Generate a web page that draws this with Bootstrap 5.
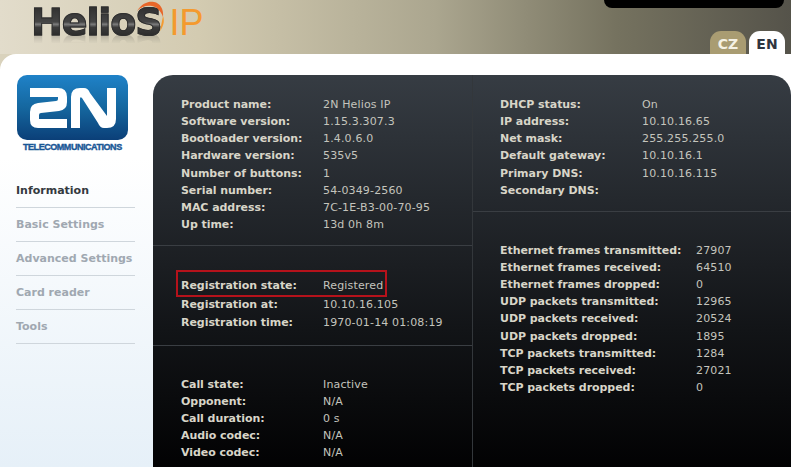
<!DOCTYPE html>
<html lang="en">
<head>
  <meta charset="UTF-8" />
  <meta name="viewport" content="width=device-width, initial-scale=1.0" />
  <title>Helios IP</title>
  <link href="https://cdn.jsdelivr.net/npm/bootstrap@5.3.0/dist/css/bootstrap.min.css" rel="stylesheet">
  <style>
    html, body { height: 467px; overflow: hidden; }
    body {
      background: #fff;
      font-family: "DejaVu Sans", sans-serif;
      font-size: 11px;
    }
    .top-bar {
      height: 54px;
      background: linear-gradient(90deg, #e2dccb 0%, #d3cbb1 25%, #aba68f 55%, #75725f 78%, #55534a 100%);
      position: relative;
    }
    .brand { padding: 3px 0 0 31px; height: 54px; overflow: hidden; }
    .brand-main {
      font-family: "DejaVu Sans", sans-serif;
      font-size: 38px;
      line-height: 38px;
      font-weight: 700;
      letter-spacing: -1.1px;
      -webkit-text-stroke: 1px #2f2f2f;
      background: linear-gradient(180deg, #2b2b2b 0%, #454545 50%, #7c7c7c 56%, #3b3b3b 64%, #222 100%);
      -webkit-background-clip: text;
      background-clip: text;
      color: transparent;
      -webkit-box-reflect: below -12px linear-gradient(transparent 62%, rgba(255,255,255,.35));
    }
    .brand-ip {
      font-family: "Liberation Sans", sans-serif;
      font-size: 36px;
      line-height: 38px;
      color: #f49a2e;
      margin-left: 8px;
    }
    .brand-arc { position: absolute; left: 134px; top: 0; }
    .user-tab {
      position: absolute;
      top: 0; left: 604px;
      width: 180px; height: 8px;
      background: #000;
      border-radius: 0 0 8px 8px;
    }
    .lang-tabs { position: absolute; right: 6px; bottom: 0; gap: 3px; }
    .lang-tab {
      width: 36px; height: 23px;
      border-radius: 11px 11px 0 0;
      font-weight: 700;
      font-size: 14px;
      line-height: 26px;
      text-align: center;
      text-decoration: none;
    }
    .lang-cz { background: #a99c72; color: #f5f1e4; }
    .lang-en { background: #fff; color: #2f3540; }
    .page-body { height: 413px; background: linear-gradient(180deg, #fff 0%, #fff 25%, #e6f0f8 100%); position: relative; }
    .page-body::before {
      content: "";
      position: absolute;
      left: 0; top: 0;
      width: 16px; height: 16px;
      background: #d9d2bc;
      clip-path: path("M0 0H16A16 16 0 0 0 0 16Z");
    }
    .side-col { width: 153px; flex: none; padding: 21px 18px 0 16px; }
    .logo-box {
      width: 111px; height: 65px;
      margin-left: 1px;
      border-radius: 10px;
      background: linear-gradient(180deg, #1f82c8 0%, #15679f 50%, #0b3f78 100%);
    }
    .logo-box svg { display: block; }
    .logo-text {
      font-family: "Liberation Sans", sans-serif;
      font-weight: 700;
      font-size: 9px;
      letter-spacing: -.45px;
      -webkit-text-stroke: .4px #1a5796;
      color: #1a5796;
      line-height: 11px;
      margin: 2px 0 0 7px;
      white-space: nowrap;
    }
    .side-menu { margin-top: 21px; }
    .side-menu a {
      display: block;
      height: 34px;
      line-height: 34px;
      font-size: 11px;
      font-weight: 700;
      color: #a0a8b1;
      text-decoration: none;
      border-bottom: 1px solid #cfd6dc;
      white-space: nowrap;
    }
    .side-menu a:first-child { color: #34393f; }
    .info-panel {
      width: 638px;
      height: 392px;
      margin-top: 21px;
      border-radius: 20px 20px 0 0;
      background: linear-gradient(180deg, #363c43 0%, #24282d 32%, #121417 65%, #020203 100%);
      color: #d6d3c6;
    }
    .info-left { width: 319px; flex: none; }
    .info-right { flex: 1; border-left: 1px solid #33373b; }
    .info-block { border-bottom: 1px solid #3a3e43; padding-left: 28px; }
    .info-right .info-block { padding-left: 27px; }
    .info-line { height: 17.15px; line-height: 17px; display: flex; white-space: nowrap; }
    .info-line b { font-weight: 700; letter-spacing: -.05px; color: #d8d5c8; }
    .info-line span { font-weight: 400; color: #c4c4bd; letter-spacing: .15px; }
    .info-left .info-line b { width: 142px; flex: none; }
    .info-right .info-line b { width: 142px; flex: none; }
    .info-right .stats .info-line b { width: 196px; }
    .reg-mark {
      position: absolute;
      left: -5px; top: -7px;
      width: 211px; height: 27px;
      border: 2px solid #b5121b;
    }
    .grp-a { padding-top: 21px; padding-bottom: 12px; }
    .grp-b { padding-top: 31px; padding-bottom: 14px; }
    .grp-b .reg-gap { margin-top: 1.4px; }
    .grp-c { padding-top: 30px; border-bottom: 0; }
    .grp-c .info-line { height: 17px; }
    .grp-d { padding-top: 21px; padding-bottom: 12px; }
    .grp-e { padding-top: 30px; border-bottom: 0; }
  </style>
</head>
<body>
  <div class="top-bar">
    <div class="brand"><span class="brand-main d-inline-block">HelioS</span><span class="brand-ip">IP</span></div>
    <svg class="brand-arc" width="34" height="36" viewBox="0 0 34 36">
      <path d="M3 11C8 3 15 1 20 2C26 3 30 9 29 17C27 11 23 7 18 6C12 5 7 7 3 11Z" fill="#e8672a"/>
      <path d="M29 16C31 21 29 27 26 31C27 26 28 21 29 16Z" fill="#f49a2e"/>
    </svg>
    <div class="user-tab"></div>
    <div class="lang-tabs d-flex">
      <a class="lang-tab lang-cz" href="#">CZ</a>
      <a class="lang-tab lang-en" href="#">EN</a>
    </div>
  </div>

  <div class="page-body d-flex">
    <div class="side-col">
      <div class="logo-box">
        <svg width="111" height="65" viewBox="0 0 111 65">
          <path d="M13 13H41Q50 13 50 22V27Q50 35 42 36L24 38Q22 38 22 40V44H50V53H21Q13 53 13 45V37Q13 29 21 28L39 26Q41 26 41 24V22H13Z" fill="#fff"/>
          <path d="M54 53V22Q54 13 63 13H67Q71 13 73 18L90 41V13H99V44Q99 53 90 53H87Q83 53 81 48L65 23Q63 21 63 24V53Z" fill="#fff"/>
        </svg>
      </div>
      <div class="logo-text">TELECOMMUNICATIONS</div>
      <nav class="side-menu">
        <a href="#">Information</a>
        <a href="#">Basic Settings</a>
        <a href="#">Advanced Settings</a>
        <a href="#">Card reader</a>
        <a href="#">Tools</a>
      </nav>
    </div>

    <div class="info-panel d-flex">
      <div class="info-left">
        <div class="info-block grp-a">
          <div class="info-line"><b>Product name:</b><span>2N Helios IP</span></div>
          <div class="info-line"><b>Software version:</b><span>1.15.3.307.3</span></div>
          <div class="info-line"><b>Bootloader version:</b><span>1.4.0.6.0</span></div>
          <div class="info-line"><b>Hardware version:</b><span>535v5</span></div>
          <div class="info-line"><b>Number of buttons:</b><span>1</span></div>
          <div class="info-line"><b>Serial number:</b><span>54-0349-2560</span></div>
          <div class="info-line"><b>MAC address:</b><span>7C-1E-B3-00-70-95</span></div>
          <div class="info-line"><b>Up time:</b><span>13d 0h 8m</span></div>
        </div>
        <div class="info-block grp-b">
          <div class="position-relative">
            <div class="reg-mark"></div>
            <div class="info-line"><b>Registration state:</b><span>Registered</span></div>
          </div>
          <div class="info-line reg-gap"><b>Registration at:</b><span>10.10.16.105</span></div>
          <div class="info-line reg-gap"><b>Registration time:</b><span>1970-01-14 01:08:19</span></div>
        </div>
        <div class="info-block grp-c">
          <div class="info-line"><b>Call state:</b><span>Inactive</span></div>
          <div class="info-line"><b>Opponent:</b><span>N/A</span></div>
          <div class="info-line"><b>Call duration:</b><span>0 s</span></div>
          <div class="info-line"><b>Audio codec:</b><span>N/A</span></div>
          <div class="info-line"><b>Video codec:</b><span>N/A</span></div>
        </div>
      </div>
      <div class="info-right">
        <div class="info-block grp-d">
          <div class="info-line"><b>DHCP status:</b><span>On</span></div>
          <div class="info-line"><b>IP address:</b><span>10.10.16.65</span></div>
          <div class="info-line"><b>Net mask:</b><span>255.255.255.0</span></div>
          <div class="info-line"><b>Default gateway:</b><span>10.10.16.1</span></div>
          <div class="info-line"><b>Primary DNS:</b><span>10.10.16.115</span></div>
          <div class="info-line"><b>Secondary DNS:</b><span></span></div>
        </div>
        <div class="info-block stats grp-e">
          <div class="info-line"><b>Ethernet frames transmitted:</b><span>27907</span></div>
          <div class="info-line"><b>Ethernet frames received:</b><span>64510</span></div>
          <div class="info-line"><b>Ethernet frames dropped:</b><span>0</span></div>
          <div class="info-line"><b>UDP packets transmitted:</b><span>12965</span></div>
          <div class="info-line"><b>UDP packets received:</b><span>20524</span></div>
          <div class="info-line"><b>UDP packets dropped:</b><span>1895</span></div>
          <div class="info-line"><b>TCP packets transmitted:</b><span>1284</span></div>
          <div class="info-line"><b>TCP packets received:</b><span>27021</span></div>
          <div class="info-line"><b>TCP packets dropped:</b><span>0</span></div>
        </div>
      </div>
    </div>
  </div>
</body>
</html>
